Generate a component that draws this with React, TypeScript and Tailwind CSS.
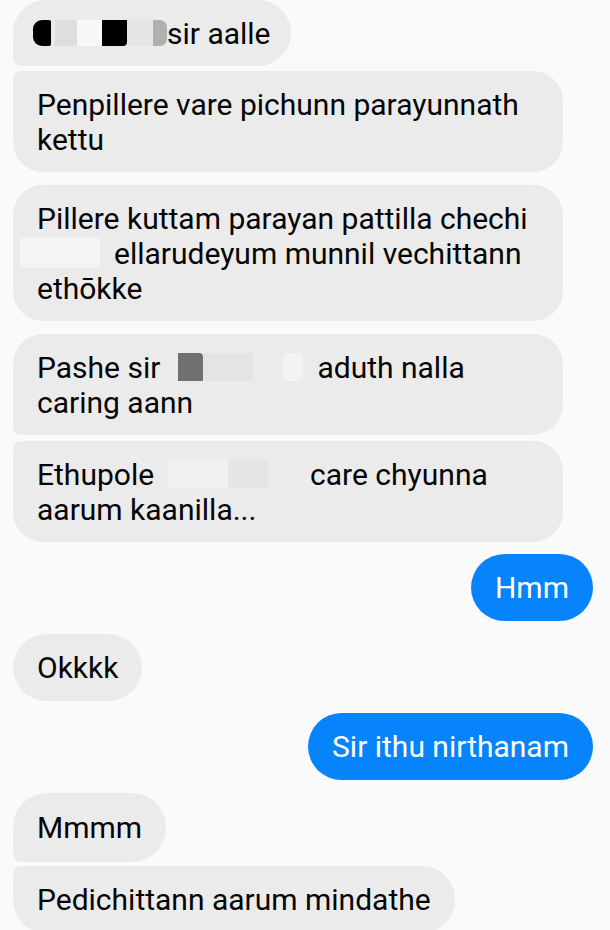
import React from "react";

const base =
  "bg-[#ebebeb] text-[#050505] px-[24px] py-[15.5px] text-[30px] leading-[35px] font-['Roboto',sans-serif]";
const single =
  "bg-[#ebebeb] text-[#050505] px-[24px] py-[16px] text-[30px] leading-[35px] font-['Roboto',sans-serif] self-start whitespace-nowrap";
const blue =
  "bg-[#0784fb] text-white px-[24px] py-[16px] text-[30px] leading-[35px] font-['Roboto',sans-serif] rounded-full self-end whitespace-nowrap";

export default function App() {
  return (
    <div className="w-[610px] h-[930px] overflow-hidden bg-[#fafafa] font-['Roboto',sans-serif]">
      <div className="flex flex-col pl-[13px] pr-[17px]">
        {/* bubble 1 */}
        <div className={`${base} self-start whitespace-nowrap rounded-[33px] rounded-bl-[8px] pl-[20px] pr-[20px]`}>
          <div className="flex items-center h-[35px]">
            <span className="inline-block w-[18px] h-[26px] bg-black rounded-l-[9px] rounded-r-[2px]" />
            <span className="inline-block w-[4px] h-[26px]" />
            <span className="inline-block w-[22px] h-[26px] bg-[#dedede]" />
            <span className="inline-block w-[25px] h-[26px] bg-[#f8f8f8]" />
            <span className="inline-block w-[25px] h-[26px] bg-black rounded-br-[4px]" />
            <span className="inline-block w-[26px] h-[26px] bg-[#e6e6e6]" />
            <span className="inline-block w-[14px] h-[26px] bg-[#b0b0b0] rounded-r-[7px]" />
            <span>sir aalle</span>
          </div>
        </div>

        {/* bubble 2 */}
        <div className={`${base} mt-[5px] w-[550px] rounded-[30px] rounded-tl-[8px]`}>
          Penpillere vare pichunn parayunnath
          <br />
          kettu
        </div>

        {/* bubble 3 */}
        <div className={`${base} mt-[13px] w-[550px] rounded-[30px]`}>
          Pillere kuttam parayan pattilla chechi
          <br />
          <span className="inline-flex items-center align-top h-[35px]">
            <span className="inline-block -ml-[17px] w-[80px] h-[30px] bg-[#f4f4f4] rounded-[4px]" />
            <span className="inline-block w-[14px]" />
          </span>
          ellarudeyum munnil vechittann
          <br />
          ethōkke
        </div>

        {/* bubble 4 */}
        <div className={`${base} mt-[13px] w-[550px] rounded-[30px] rounded-bl-[8px]`}>
          <span className="inline-flex items-center align-top h-[35px] whitespace-nowrap">
            <span>Pashe sir</span>
            <span className="inline-block ml-[18px] w-[25px] h-[28px] bg-[#707070] rounded-tr-[4px]" />
            <span className="inline-block w-[50px] h-[28px] bg-[#e4e4e4]" />
            <span className="inline-block w-[30px] h-[28px]" />
            <span className="inline-block w-[20px] h-[28px] bg-[#f3f3f3] rounded-[6px]" />
            <span className="inline-block w-[14px]" />
            <span>aduth nalla</span>
          </span>
          <br />
          caring aann
        </div>

        {/* bubble 5 */}
        <div className={`${base} mt-[6px] w-[550px] rounded-[30px] rounded-tl-[8px]`}>
          <span className="inline-flex items-center align-top h-[35px] whitespace-nowrap">
            <span>Ethupole</span>
            <span className="inline-block ml-[14px] w-[60px] h-[28px] bg-[#f1f1f1]" />
            <span className="inline-block w-[40px] h-[28px] bg-[#e6e6e6]" />
            <span className="inline-block w-[35px] h-[28px] bg-[#ebebeb]" />
            <span className="inline-block w-[7px]" />
            <span>care chyunna</span>
          </span>
          <br />
          aarum kaanilla...
        </div>

        <div className={`${blue} mt-[12px]`}>Hmm</div>

        <div className={`${single} mt-[13px] rounded-full`}>Okkkk</div>

        <div className={`${blue} mt-[12px]`}>Sir ithu nirthanam</div>

        <div className={`${single} mt-[13px] py-[17px] rounded-[34px] rounded-bl-[8px]`}>Mmmm</div>

        <div className={`${single} mt-[4px] rounded-[33px] rounded-tl-[8px]`}>
          Pedichittann aarum mindathe
        </div>
      </div>
    </div>
  );
}
